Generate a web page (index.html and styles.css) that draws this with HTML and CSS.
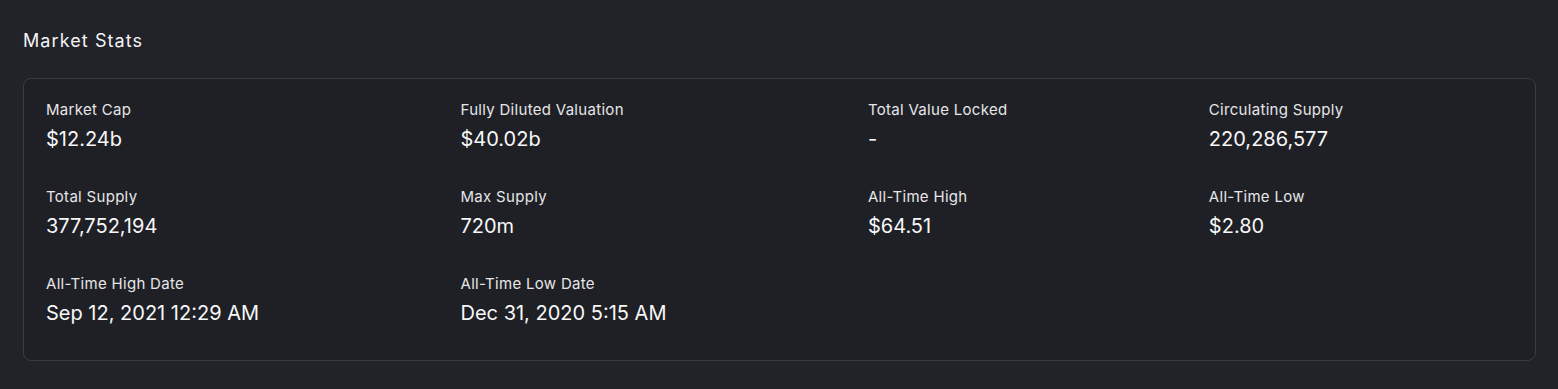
FILE: index.html
```html
<!DOCTYPE html>
<html lang="en">
<head>
<meta charset="utf-8">
<title>Market Stats</title>
<link rel="stylesheet" href="styles.css">
</head>
<body>
<section class="market-stats">
  <h2 class="title">Market Stats</h2>
  <div class="card">
    <div class="stat"><div class="label">Market Cap</div><div class="value">$12.24b</div></div>
    <div class="stat"><div class="label">Fully Diluted Valuation</div><div class="value">$40.02b</div></div>
    <div class="stat"><div class="label">Total Value Locked</div><div class="value">-</div></div>
    <div class="stat"><div class="label">Circulating Supply</div><div class="value">220,286,577</div></div>
    <div class="stat"><div class="label">Total Supply</div><div class="value">377,752,194</div></div>
    <div class="stat"><div class="label">Max Supply</div><div class="value">720m</div></div>
    <div class="stat"><div class="label">All-Time High</div><div class="value">$64.51</div></div>
    <div class="stat"><div class="label">All-Time Low</div><div class="value">$2.80</div></div>
    <div class="stat"><div class="label">All-Time High Date</div><div class="value">Sep 12, 2021 12:29 AM</div></div>
    <div class="stat"><div class="label">All-Time Low Date</div><div class="value">Dec 31, 2020 5:15 AM</div></div>
  </div>
</section>
</body>
</html>
```
FILE: styles.css
```css
html, body {
  margin: 0;
  padding: 0;
  background: #222329;
}
body {
  font-family: Inter, "Noto Sans", sans-serif;
  color: #f4f4f5;
  -webkit-font-smoothing: antialiased;
}
.market-stats {
  padding: 27px 22px 27px 23px;
}
.title {
  margin: 0 0 23px;
  font-size: 18px;
  line-height: 28px;
  font-weight: 400;
  letter-spacing: 0.06em;
  color: #f4f4f5;
}
.card {
  border: 1px solid #3b3c43;
  border-radius: 8px;
  background: #1f2025;
  padding: 21px 22px 33px;
  display: grid;
  grid-template-columns: repeat(4, auto);
  column-gap: 32px;
  row-gap: 34px;
}
.stat {
  display: flex;
  flex-direction: column;
  gap: 5px;
}
.label {
  font-size: 15px;
  line-height: 20px;
  letter-spacing: 0.02em;
  color: #e6e6e8;
}
.value {
  font-size: 20px;
  line-height: 28px;
  color: #f7f7f8;
}
```
